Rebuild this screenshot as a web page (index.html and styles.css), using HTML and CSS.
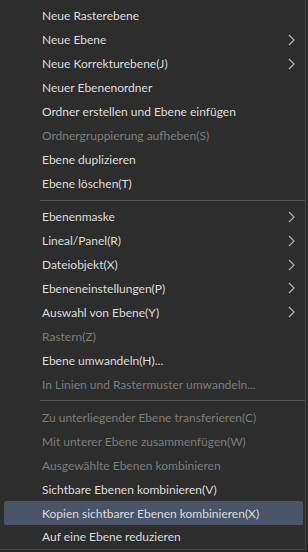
FILE: index.html
```html
<!DOCTYPE html>
<html lang="de">
<head>
    <meta charset="UTF-8">
    <meta name="viewport" content="width=device-width, initial-scale=1.0">
    <title>Ebene</title>
    <link rel="stylesheet" href="styles.css">
</head>
<body>
    <div class="menu">
        <div class="menu-item">Neue Rasterebene</div>
        <div class="menu-item has-sub">Neue Ebene<svg class="arrow" viewBox="0 0 8 12"><path d="M1 1l5 5-5 5"/></svg></div>
        <div class="menu-item has-sub">Neue Korrekturebene(J)<svg class="arrow" viewBox="0 0 8 12"><path d="M1 1l5 5-5 5"/></svg></div>
        <div class="menu-item">Neuer Ebenenordner</div>
        <div class="menu-item">Ordner erstellen und Ebene einfügen</div>
        <div class="menu-item disabled">Ordnergruppierung aufheben(S)</div>
        <div class="menu-item">Ebene duplizieren</div>
        <div class="menu-item">Ebene löschen(T)</div>
        <div class="separator"></div>
        <div class="menu-item has-sub">Ebenenmaske<svg class="arrow" viewBox="0 0 8 12"><path d="M1 1l5 5-5 5"/></svg></div>
        <div class="menu-item has-sub">Lineal/Panel(R)<svg class="arrow" viewBox="0 0 8 12"><path d="M1 1l5 5-5 5"/></svg></div>
        <div class="menu-item has-sub">Dateiobjekt(X)<svg class="arrow" viewBox="0 0 8 12"><path d="M1 1l5 5-5 5"/></svg></div>
        <div class="menu-item has-sub">Ebeneneinstellungen(P)<svg class="arrow" viewBox="0 0 8 12"><path d="M1 1l5 5-5 5"/></svg></div>
        <div class="menu-item has-sub">Auswahl von Ebene(Y)<svg class="arrow" viewBox="0 0 8 12"><path d="M1 1l5 5-5 5"/></svg></div>
        <div class="menu-item disabled">Rastern(Z)</div>
        <div class="menu-item">Ebene umwandeln(H)...</div>
        <div class="menu-item disabled">In Linien und Rastermuster umwandeln...</div>
        <div class="separator"></div>
        <div class="menu-item disabled">Zu unterliegender Ebene transferieren(C)</div>
        <div class="menu-item disabled">Mit unterer Ebene zusammenfügen(W)</div>
        <div class="menu-item disabled">Ausgewählte Ebenen kombinieren</div>
        <div class="menu-item">Sichtbare Ebenen kombinieren(V)</div>
        <div class="menu-item active">Kopien sichtbarer Ebenen kombinieren(X)</div>
        <div class="menu-item">Auf eine Ebene reduzieren</div>
    </div>
</body>
</html>
```

FILE: styles.css
```css
body {
    margin: 0;
    background: #262626;
    font-family: Lato, "Liberation Sans", sans-serif;
    font-size: 12px;
}
.menu {
    width: 306px;
    height: 550px;
    padding-top: 4px;
    box-sizing: border-box;
    background: #2d2d2d;
    border-right: 1px solid #454545;
    border-bottom: 1px solid #454545;
    display: flex;
    flex-direction: column;
}
.menu-item {
    height: 24px;
    margin: 0 2px 0 4px;
    padding-left: 38px;
    padding-right: 7px;
    display: flex;
    align-items: center;
    justify-content: space-between;
    color: #dcdcdc;
    border-radius: 2px;
    white-space: nowrap;
}
.menu-item.disabled {
    color: #7c7c7c;
}
.menu-item.active {
    background: #4a5468;
}
.arrow {
    width: 8px;
    height: 12px;
    fill: none;
    stroke: #b4b4b4;
    stroke-width: 1.2;
}
.separator {
    height: 1px;
    margin: 4px 0 4px 40px;
    background: #585858;
}
```
